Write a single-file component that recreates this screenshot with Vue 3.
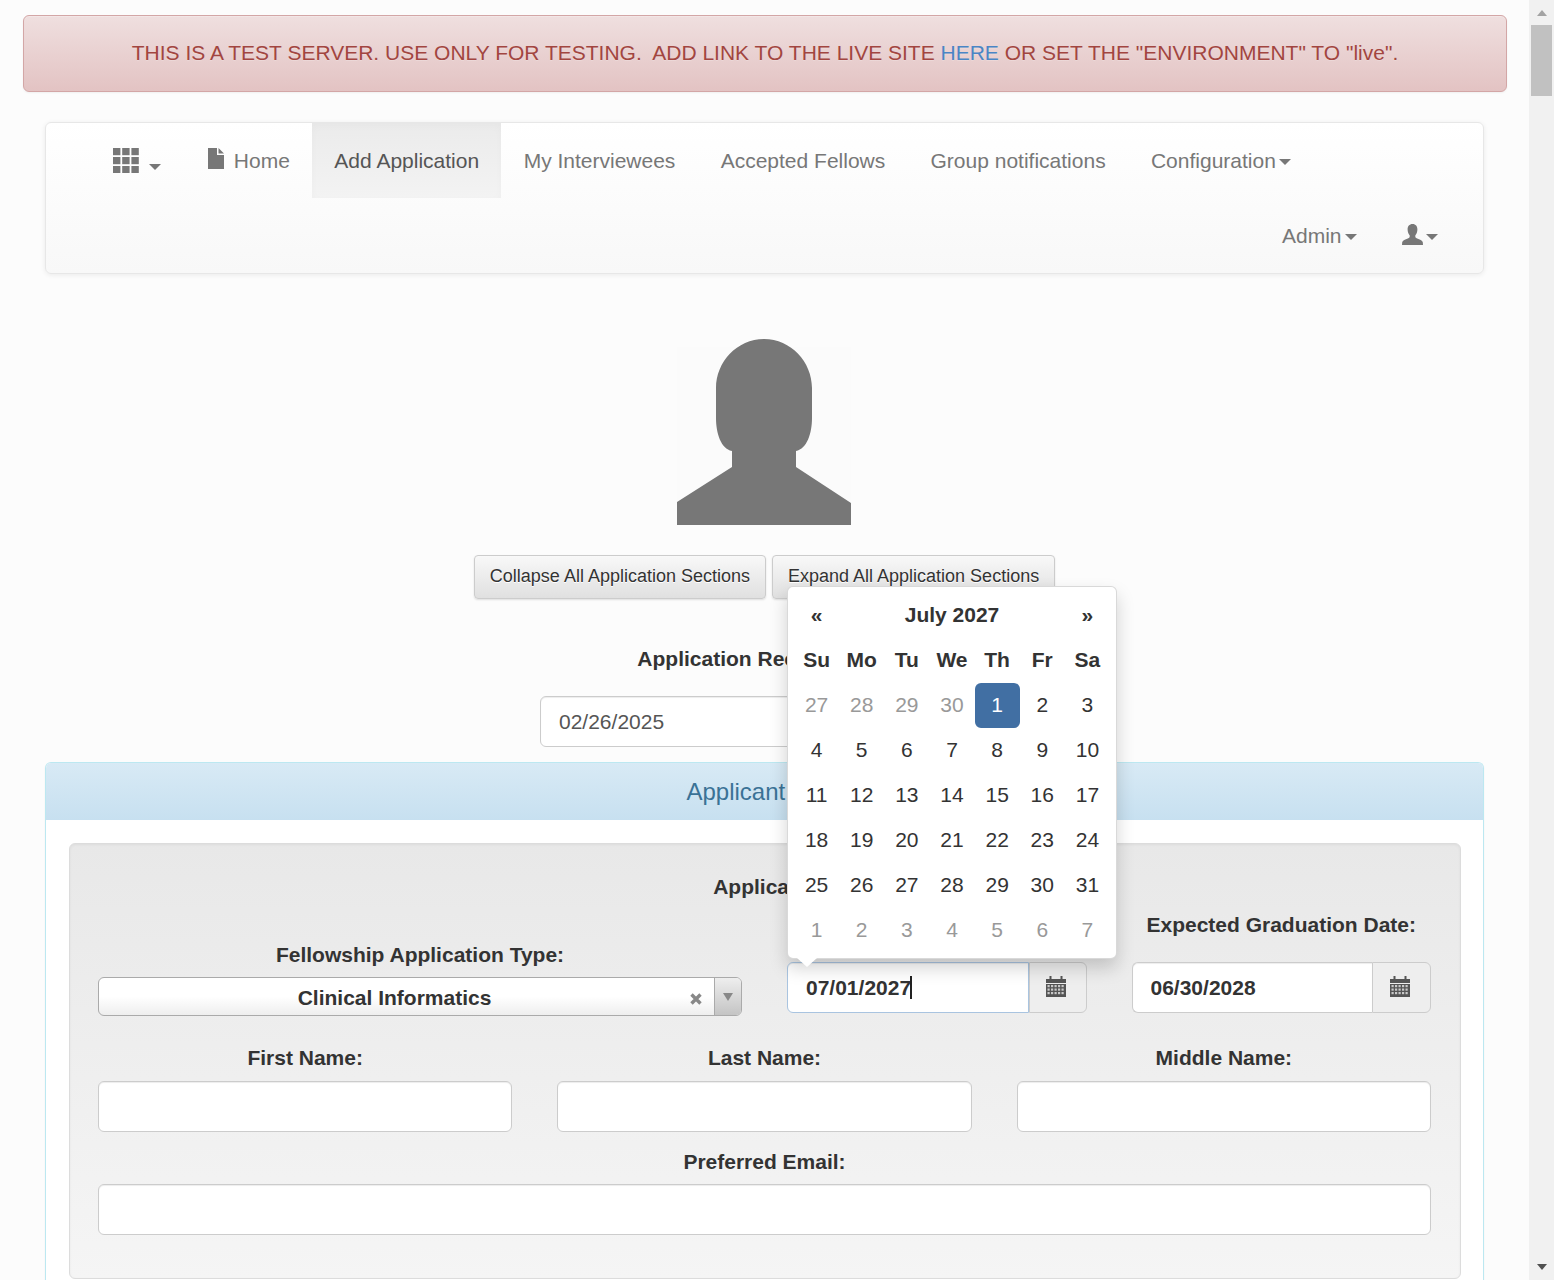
<script setup>
const dow = ['Su', 'Mo', 'Tu', 'We', 'Th', 'Fr', 'Sa']
const days = [
  [27, 28, 29, 30, 1, 2, 3],
  [4, 5, 6, 7, 8, 9, 10],
  [11, 12, 13, 14, 15, 16, 17],
  [18, 19, 20, 21, 22, 23, 24],
  [25, 26, 27, 28, 29, 30, 31],
  [1, 2, 3, 4, 5, 6, 7]
]
const isMuted = (w, d) => (w === 0 && d > 7) || w === 5
const isActive = (w, d) => w === 0 && d === 1
const navLinks = ['My Interviewees', 'Accepted Fellows', 'Group notifications']
const names = ['First Name:', 'Last Name:', 'Middle Name:']
const calCols = [1.5, 5, 8.5, 12, 15.5]
const calRows = [9, 12.5, 16]
</script>

<template>
  <div class="page">
    <div class="main">
      <div class="alert">
        THIS IS A TEST SERVER. USE ONLY FOR TESTING.&nbsp; ADD LINK TO THE LIVE SITE <a class="alert-link">HERE</a> OR SET THE "ENVIRONMENT" TO "live".
      </div>

      <div class="content">
        <nav class="navbar">
          <div class="nav-row">
            <a class="nav-item grid-item">
              <svg class="ic-grid" width="26" height="25" viewBox="0 0 26 25">
                <g fill="#777">
                  <rect x="0" y="0" width="7.4" height="7.2" /><rect x="9.2" y="0" width="7.4" height="7.2" /><rect x="18.4" y="0" width="7.4" height="7.2" />
                  <rect x="0" y="9" width="7.4" height="7.2" /><rect x="9.2" y="9" width="7.4" height="7.2" /><rect x="18.4" y="9" width="7.4" height="7.2" />
                  <rect x="0" y="18" width="7.4" height="7.2" /><rect x="9.2" y="18" width="7.4" height="7.2" /><rect x="18.4" y="18" width="7.4" height="7.2" />
                </g>
              </svg>
              <span class="caret caret-grid"></span>
            </a>
            <a class="nav-item">
              <svg class="ic-file" width="16" height="21" viewBox="0 0 16 21">
                <path fill="#777" d="M0 0H9V7H16V21H0Z" /><path fill="#777" d="M10.5 0L16 5.6H10.5Z" />
              </svg>
              Home
            </a>
            <a class="nav-item active">Add Application</a>
            <a v-for="l in navLinks" :key="l" class="nav-item nav-link">{{ l }}</a>
            <a class="nav-item">Configuration<span class="caret"></span></a>
          </div>
          <div class="nav-row nav-row-right">
            <a class="nav-item">Admin<span class="caret"></span></a>
            <a class="nav-item user-item">
              <svg class="ic-user" width="21" height="21" viewBox="0 0 21 21">
                <path fill="#777" d="M10.6 0C7.3 0 5.6 2.3 5.6 5.4C5.6 8 6.6 10 7.7 11.4C7.9 12.9 7.4 13.9 5.8 14.6C3.4 15.7 0.6 16.5 0.2 18.2L0 21H21L20.8 18.2C20.4 16.5 17.6 15.7 15.2 14.6C13.6 13.9 13.1 12.9 13.3 11.4C14.4 10 15.4 8 15.4 5.4C15.4 2.3 13.7 0 10.6 0Z" />
              </svg>
              <span class="caret"></span>
            </a>
          </div>
        </nav>

        <div class="avatar-wrap">
          <svg class="avatar" width="174" height="187" viewBox="0 0 174 187">
            <rect x="0" y="9" width="174" height="178" fill="#fbfbfb" />
            <path fill="#777" d="M0 164L55 129V113C44 111 39 95 39 80V50C39 24 60 1 87 1C114 1 135 24 135 50V80C135 95 130 111 119 113V129L174 165V187H0Z" />
          </svg>
        </div>

        <div class="btn-row">
          <button class="btn">Collapse All Application Sections</button>
          <button class="btn">Expand All Application Sections</button>
        </div>

        <div class="receipt">
          <label class="lbl lbl-gap">Application Receipt Date:</label>
          <input class="ctl receipt-input" value="02/26/2025" />
        </div>

        <section class="panel">
          <div class="panel-heading">Applicant Data</div>
          <div class="panel-body">
            <div class="well">
              <label class="lbl applicant-lbl">Applicant:</label>
              <div class="grid-top">
                <div class="type-col">
                  <label class="lbl lbl-tight">Fellowship Application Type:</label>
                  <div class="select">
                    <span class="select-text">Clinical Informatics</span>
                    <svg class="select-x" width="12" height="12" viewBox="0 0 12 12">
                      <path d="M1.5 1.5L10.5 10.5M10.5 1.5L1.5 10.5" stroke="#888" stroke-width="3.4" fill="none" />
                    </svg>
                    <span class="select-arrow"><i></i></span>
                  </div>
                </div>

                <div class="date-col">
                  <label class="lbl lbl-gap">Expected Start Date:</label>
                  <div class="input-group focus">
                    <input class="ctl bold group-input" value="07/01/2027" />
                    <span class="text-cursor"></span>
                    <span class="addon">
                      <svg class="cal-ic" width="20" height="21" viewBox="0 0 20 21">
                        <path fill="#555" d="M0 3H3.5V0H5.5V3H14.5V0H16.5V3H20V7H0Z" />
                        <rect x="0" y="8" width="20" height="13" fill="#555" />
                        <template v-for="y in calRows" :key="y">
                          <rect v-for="x in calCols" :key="x" :x="x" :y="y" width="2.2" height="2.2" fill="#c9c9c9" />
                        </template>
                      </svg>
                    </span>
                    <div class="datepicker">
                      <table class="cal">
                        <thead>
                          <tr>
                            <th>«</th>
                            <th colspan="5">July 2027</th>
                            <th>»</th>
                          </tr>
                          <tr>
                            <th v-for="d in dow" :key="d">{{ d }}</th>
                          </tr>
                        </thead>
                        <tbody>
                          <tr v-for="(week, w) in days" :key="w">
                            <td v-for="(d, i) in week" :key="i" :class="{ muted: isMuted(w, d), selected: isActive(w, d) }">{{ d }}</td>
                          </tr>
                        </tbody>
                      </table>
                      <span class="dp-arrow"></span>
                    </div>
                  </div>
                </div>

                <div class="date-col">
                  <label class="lbl lbl-gap">Expected Graduation Date:</label>
                  <div class="input-group wide-addon">
                    <input class="ctl bold group-input" value="06/30/2028" />
                    <span class="addon">
                      <svg class="cal-ic" width="20" height="21" viewBox="0 0 20 21">
                        <path fill="#555" d="M0 3H3.5V0H5.5V3H14.5V0H16.5V3H20V7H0Z" />
                        <rect x="0" y="8" width="20" height="13" fill="#555" />
                        <template v-for="y in calRows" :key="y">
                          <rect v-for="x in calCols" :key="x" :x="x" :y="y" width="2.2" height="2.2" fill="#c9c9c9" />
                        </template>
                      </svg>
                    </span>
                  </div>
                </div>
              </div>

              <div class="grid-names">
                <div v-for="n in names" :key="n">
                  <label class="lbl lbl-name">{{ n }}</label>
                  <input class="ctl" />
                </div>
              </div>

              <div class="email">
                <label class="lbl lbl-tight">Preferred Email:</label>
                <input class="ctl" />
              </div>
            </div>
          </div>
        </section>
      </div>
    </div>

    <aside class="scrollbar">
      <span class="sb-up"></span>
      <span class="sb-thumb"></span>
      <span class="sb-down"></span>
    </aside>
  </div>
</template>

<style>
html, body { margin: 0; background: #fcfcfc; }
</style>

<style scoped>
.page {
  display: flex;
  width: 1554px;
  height: 1280px;
  overflow: hidden;
  background: #fcfcfc;
  font-family: "Liberation Sans", Arial, sans-serif;
  font-size: 21px;
  line-height: 30px;
  color: #333;
}
.main { width: 1529px; flex: none; }
.scrollbar {
  width: 25px;
  flex: none;
  background: #f1f1f1;
  display: flex;
  flex-direction: column;
  align-items: center;
}
.sb-up {
  margin-top: 10px;
  width: 0;
  height: 0;
  border-left: 5.5px solid transparent;
  border-right: 5.5px solid transparent;
  border-bottom: 6px solid #a3a3a3;
}
.sb-thumb {
  margin-top: 9px;
  width: 21px;
  height: 71px;
  background: #c1c1c1;
}
.sb-down {
  margin-top: auto;
  margin-bottom: 10px;
  width: 0;
  height: 0;
  border-left: 5.5px solid transparent;
  border-right: 5.5px solid transparent;
  border-top: 6px solid #505050;
}

.alert {
  box-sizing: border-box;
  margin: 15px 22px 30px 23px;
  height: 77px;
  padding: 21.5px 22.5px;
  border: 1px solid #d3a6a6;
  border-radius: 6px;
  background: linear-gradient(to bottom, #efdfdf, #e3c3c3);
  color: #a24540;
  text-align: center;
  text-shadow: 0 1px 0 rgba(255, 255, 255, .2);
  box-shadow: inset 0 1px 0 rgba(255, 255, 255, .25), 0 1px 2px rgba(0, 0, 0, .05);
}
.alert-link { color: #4a85c5; }

.content { margin: 0 45px; }

.navbar {
  box-sizing: border-box;
  height: 152px;
  border: 1px solid #e7e7e7;
  border-radius: 6px;
  background: linear-gradient(to bottom, #fff, #f8f8f8);
  box-shadow: 0 1px 5px rgba(0, 0, 0, .075);
  padding-left: 44.5px;
  padding-right: 23px;
}
.nav-row { display: flex; height: 75px; }
.nav-row-right { justify-content: flex-end; }
.nav-item {
  display: block;
  padding: 22.5px;
  height: 75px;
  box-sizing: border-box;
  color: #777;
  white-space: nowrap;
}
.grid-item { padding-right: 24.5px; }
.nav-link { padding-right: 22.8px; }
.nav-item.active {
  padding-left: 22px;
  padding-right: 22px;
  color: #555;
  background: linear-gradient(to bottom, #ebebeb, #f3f3f3);
  box-shadow: inset 0 3px 9px rgba(0, 0, 0, .025);
}
.ic-grid { display: inline-block; vertical-align: top; margin-top: 2.5px; }
.ic-file { display: inline-block; vertical-align: top; margin-top: 2.5px; margin-right: 4px; }
.ic-user { display: inline-block; vertical-align: top; margin-top: 3px; }
.caret {
  display: inline-block;
  width: 0;
  height: 0;
  margin-left: 3px;
  vertical-align: middle;
  border-top: 6px solid #777;
  border-left: 6px solid transparent;
  border-right: 6px solid transparent;
}
.caret-grid { margin-left: 10px; margin-top: 18px; vertical-align: top; }

.avatar-wrap {
  display: flex;
  justify-content: center;
  margin-top: 64px;
  padding-right: 1px;
  height: 187px;
}
.avatar { display: block; }

.btn-row { display: flex; justify-content: center; gap: 6px; margin-top: 30px; }
.btn {
  box-sizing: border-box;
  height: 44px;
  padding: 6px 15px 8px;
  font-family: inherit;
  font-size: 18px;
  line-height: 27px;
  color: #333;
  background: linear-gradient(to bottom, #f8f8f8, #e0e0e0);
  border: 1px solid #ccc;
  border-radius: 4px;
  text-shadow: 0 1px 0 #fff;
  box-shadow: inset 0 1px 0 rgba(255, 255, 255, .15), 0 1px 2px rgba(0, 0, 0, .12);
  white-space: nowrap;
}

.lbl {
  display: block;
  font-weight: 700;
  text-align: center;
  height: 30px;
  line-height: 30px;
  white-space: nowrap;
}
.lbl-gap { margin-bottom: 22px; }
.lbl-tight { margin-bottom: 7px; }
.lbl-name { margin-bottom: 8px; }

.ctl {
  display: block;
  box-sizing: border-box;
  width: 100%;
  height: 51px;
  padding: 9px 18px;
  font-family: inherit;
  font-size: 21px;
  line-height: 30px;
  color: #555;
  background: #fff;
  border: 1px solid #ccc;
  border-radius: 6px;
  outline: none;
  box-shadow: inset 0 1px 1px rgba(0, 0, 0, .075);
}
.bold { font-weight: 700; color: #333; }

.receipt { margin-top: 45px; }
.receipt-input { width: 449px; margin: 0 auto; }

.panel {
  margin-top: 15px;
  border: 1px solid #bce8f1;
  border-bottom: 0;
  border-radius: 6px 6px 0 0;
  background: #fff;
  box-shadow: 0 1px 2px rgba(0, 0, 0, .05);
}
.panel-heading {
  height: 57px;
  line-height: 57px;
  font-size: 24px;
  text-align: center;
  color: #3a7296;
  background: linear-gradient(to bottom, #d8eaf5, #c7e0f0);
  border-radius: 5px 5px 0 0;
}
.panel-body { padding: 23px 22.5px 0; height: 460px; }

.well {
  box-sizing: border-box;
  height: 436px;
  padding: 28px 28.5px 0;
  border: 1px solid #dcdcdc;
  border-radius: 6px;
  background: linear-gradient(to bottom, #e8e8e8, #f5f5f5);
  box-shadow: inset 0 1px 3px rgba(0, 0, 0, .05), 0 1px 0 rgba(255, 255, 255, .1);
}
.applicant-lbl { margin-bottom: 8px; }
.grid-top {
  display: grid;
  grid-template-columns: 644px 299.5px 299.5px;
  column-gap: 45px;
}
.type-col { padding-top: 30px; }
.select {
  box-sizing: border-box;
  height: 39px;
  position: relative;
  display: flex;
  align-items: center;
  border: 1px solid #aaa;
  border-radius: 6px;
  background: linear-gradient(to bottom, #fff 0%, #fff 50%, #eee 100%);
  overflow: hidden;
}
.select-text {
  flex: 1;
  padding: 2px 24px 0 0;
  text-align: center;
  font-weight: 700;
  color: #333;
}
.select-x {
  position: absolute;
  right: 39px;
  top: 15px;
}
.select-arrow {
  box-sizing: border-box;
  width: 27px;
  height: 100%;
  flex: none;
  display: flex;
  align-items: center;
  justify-content: center;
  border-left: 1px solid #aaa;
  background: linear-gradient(to bottom, #eee, #c4c4c4);
}
.select-arrow i {
  width: 0;
  height: 0;
  border-left: 5px solid transparent;
  border-right: 5px solid transparent;
  border-top: 8px solid #888;
}
.input-group { position: relative; display: flex; }
.group-input {
  flex: 1;
  min-width: 0;
  border-radius: 6px 0 0 6px;
  border-right: 0;
}
.addon {
  box-sizing: border-box;
  width: 58px;
  flex: none;
  display: flex;
  align-items: center;
  justify-content: center;
  padding: 0 4px 2px 0;
  border: 1px solid #ccc;
  border-radius: 0 6px 6px 0;
  background: #eee;
}
.wide-addon .addon { width: 59px; }
.cal-ic { display: block; }
.focus .group-input { border-color: #a9c4e0; border-right: 1px solid #a9c4e0; }
.text-cursor {
  position: absolute;
  left: 123px;
  top: 14px;
  width: 2px;
  height: 23px;
  background: #222;
}
.datepicker {
  position: absolute;
  left: 0;
  bottom: calc(100% + 3px);
  box-sizing: border-box;
  width: 330px;
  height: 373px;
  padding: 6px;
  background: #fff;
  border: 1px solid rgba(0, 0, 0, .15);
  border-radius: 6px;
  box-shadow: 0 9px 18px rgba(0, 0, 0, .175);
  z-index: 10;
}
.cal {
  width: 100%;
  border-collapse: separate;
  border-spacing: 0;
  table-layout: fixed;
}
.cal th, .cal td {
  box-sizing: border-box;
  padding: 0 0 2px;
  height: 45px;
  text-align: center;
  font-size: 21px;
  line-height: 30px;
  color: #333;
}
.cal th { font-weight: 700; }
.cal td.muted { color: #999; }
.cal td.selected {
  background: #416fa3;
  color: #fff;
  border-radius: 6px;
}
.dp-arrow {
  position: absolute;
  left: 9px;
  top: 100%;
  width: 0;
  height: 0;
  border-left: 10px solid transparent;
  border-right: 10px solid transparent;
  border-top: 9px solid #fff;
}

.grid-names {
  display: grid;
  grid-template-columns: repeat(3, 1fr);
  column-gap: 45px;
  margin-top: 27px;
}
.email { margin-top: 15px; }
</style>
